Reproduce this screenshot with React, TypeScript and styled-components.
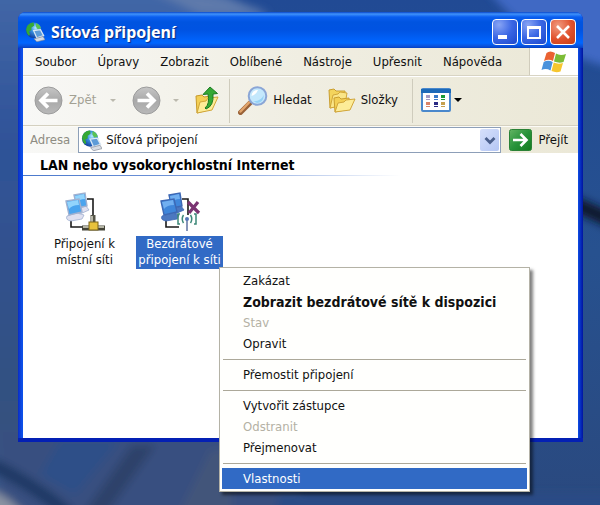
import React from "react";
import styled, { createGlobalStyle, css } from "styled-components";

const Global = createGlobalStyle`
  * { box-sizing: border-box; }
  body { margin: 0; }
  body, button, input {
    font: 13px/16px "DejaVu Sans Condensed", Tahoma, "Noto Sans", sans-serif;
    color: #111;
  }
  button { padding: 0; border: 0; background: none; white-space: nowrap; }
  ul { margin: 0; padding: 0; list-style: none; }
  svg { display: block; flex: none; }
`;

const Desktop = styled.main`
  position: relative;
  display: flex;
  min-height: 100vh;
  padding: 12px 17px 63px 18px;
  background: #284a86;
`;

const Wallpaper = styled.svg`
  position: absolute;
  inset: 0;
  width: 100%;
  height: 100%;
`;

const Window = styled.section`
  position: relative;
  flex: 1;
  min-width: 0;
  display: flex;
  flex-direction: column;
  padding: 0 5px 4px;
  border-radius: 8px 8px 0 0;
  background: linear-gradient(90deg, #0a2cc4, #0d50e8 4px, #0d50e8 calc(100% - 5px), #0a3fd4 calc(100% - 4px), #0014a0);
  box-shadow: inset 0 -4px 0 #0420b4;
`;

const TitleBar = styled.header`
  display: flex;
  align-items: center;
  height: 36px;
  margin: 0 -5px;
  padding: 4px 7px 0 7px;
  gap: 6px;
  border-radius: 8px 8px 0 0;
  background: linear-gradient(#0a46c8, #3f92fb 2px, #0a5ef0 5px, #0054e0 10px, #0053e2 18px, #0062fa 28px, #0066ff 31px, #0a52dc 34px, #0340c4);
`;

const Title = styled.h1`
  flex: 1;
  margin: 0;
  font: bold 16px/22px "Noto Sans", sans-serif;
  color: #fff;
  text-shadow: 1px 1px 1px #0a2a80;
`;

const WindowButtons = styled.div`
  display: flex;
  gap: 3px;
`;

const WindowButton = styled.button<{ $danger?: boolean }>`
  display: grid;
  place-items: center;
  width: 26px;
  height: 26px;
  border: 1px solid #fff;
  border-radius: 4px;
  background: ${(p) =>
    p.$danger
      ? "radial-gradient(circle at 30% 25%, #f09a80, #e0502c 55%, #c43c14)"
      : "radial-gradient(circle at 25% 20%, #88a4f4, #3a66e4 50%, #1c48cc)"};
`;

const Bar = styled.div`
  display: flex;
  align-items: center;
  background: linear-gradient(90deg, #f8f8f6, #f0eee2 50%, #ebe8d7);
`;

const MenuBar = styled(Bar)`
  align-items: stretch;
  height: 28px;
  padding-left: 1px;
  border-bottom: 1px solid #d8d4c4;
`;

const MenuBarItem = styled.button`
  padding: 0 10px 0 11px;
`;

const Brand = styled.div`
  display: grid;
  place-items: center;
  width: 49px;
  margin-left: auto;
  border-left: 1px solid #d0ccbc;
  background: #fff;
`;

const ToolBar = styled(Bar)`
  height: 50px;
  padding: 0 12px 2px 11px;
  border-top: 1px solid #fff;
  border-bottom: 1px solid #d4d0c0;
`;

const ToolButton = styled.button<{ $gap?: number }>`
  display: flex;
  align-items: center;
  gap: ${(p) => p.$gap ?? 6}px;
  &:disabled { color: #a3a194; }
`;

const Arrow = styled.span<{ $faint?: boolean }>`
  border: ${(p) => (p.$faint ? 3 : 4)}px solid transparent;
  border-top-color: ${(p) => (p.$faint ? "#bbb9ae" : "#000")};
  border-bottom: 0;
  margin-left: ${(p) => (p.$faint ? 8 : 0)}px;
`;

const Spacer = styled.span<{ $narrow?: boolean }>`
  width: ${(p) => (p.$narrow ? 4 : 16)}px;
`;

const Divider = styled.span`
  align-self: stretch;
  width: 1px;
  margin: 2px 8px 0 10px;
  background: #cfccbd;
`;

const AddressBar = styled(Bar)`
  height: 27px;
  padding: 0 10px 0 7px;
  border-top: 1px solid #fcfbf6;
`;

const AddressLabel = styled.label`
  margin-right: 8px;
  color: #8e8c82;
`;

const AddressField = styled.div`
  flex: 1;
  min-width: 0;
  display: flex;
  align-items: center;
  height: 26px;
  padding: 1px 1px 1px 2px;
  border: 1px solid #8d9fb8;
  background: #fff;
`;

const AddressInput = styled.input`
  flex: 1;
  min-width: 0;
  padding: 0 0 0 4px;
  border: 0;
  outline: 0;
  background: transparent;
`;

const DropButton = styled.button`
  display: grid;
  place-items: center;
  width: 19px;
  height: 22px;
  border-radius: 2px;
  background: linear-gradient(135deg, #d6e0fb, #b4c6f4);
`;

const GoButton = styled(ToolButton)`
  margin-left: 8px;
`;

const Content = styled.div`
  flex: 1;
  background: #fff;
`;

const GroupTitle = styled.h2`
  margin: 0;
  padding: 4px 17px 2px;
  font-size: 14px;
  line-height: 16px;
  border-bottom: 1px solid;
  border-image: linear-gradient(90deg, #4a78cc, #7b9cdb 35%, transparent 68%) 1;
  color: #000;
`;

const Items = styled.ul`
  display: flex;
  gap: 6px;
  padding: 16px 17px;
`;

const Item = styled.li`
  position: relative;
  width: 89px;
`;

const ItemButton = styled.button`
  display: flex;
  flex-direction: column;
  align-items: center;
  gap: 4px;
  width: 100%;
  line-height: 16px;
`;

const ItemLabel = styled.span<{ $selected?: boolean }>`
  padding: 0 2px 1px;
  ${(p) =>
    p.$selected &&
    css`
      color: #fff;
      background: #316ac5;
    `}
`;

const ContextMenu = styled.ul`
  position: absolute;
  top: 75px;
  left: 84px;
  z-index: 1;
  width: 311px;
  padding: 2px;
  border: 1px solid #b4b2a6;
  background: #fffffd;
  box-shadow: 3px 3px 3px rgba(0, 0, 0, 0.5);
`;

const MenuRow = styled.button<{ $active?: boolean; $strong?: boolean }>`
  display: block;
  width: 100%;
  height: 21px;
  padding: 0 21px;
  text-align: left;
  color: ${(p) => (p.$active ? "#fff" : "#111")};
  background: ${(p) => (p.$active ? "#316ac5" : "transparent")};
  ${(p) => p.$strong && "font-size: 14px; font-weight: bold;"}
  &:disabled { color: #b4b1a4; }
`;

const Separator = styled.li`
  height: 1px;
  margin: 5px 1px 4px;
  background: #aca899;
`;

function WallpaperArt() {
  return (
    <Wallpaper viewBox="0 0 600 505" preserveAspectRatio="none" aria-hidden="true">
      <defs>
        <linearGradient id="left" x1="0" y1="0" x2="0" y2="1">
          <stop offset="0" stopColor="#4469a8" />
          <stop offset=".3" stopColor="#2f5298" />
          <stop offset=".8" stopColor="#34517f" />
          <stop offset="1" stopColor="#3a5a90" />
        </linearGradient>
        <linearGradient id="right" x1="0" y1="0" x2="0" y2="1">
          <stop offset="0" stopColor="#214a94" />
          <stop offset=".5" stopColor="#27518f" />
          <stop offset="1" stopColor="#2a497f" />
        </linearGradient>
        <filter id="soft"><feGaussianBlur stdDeviation="4" /></filter>
      </defs>
      <rect width="600" height="505" fill="url(#right)" />
      <g filter="url(#soft)">
        <path d="M-20-20H200Q250 5 300 40V530H-20Z" fill="url(#left)" />
        <path d="M170-10Q230-4 270 14H200L150-10Z" fill="#5f7aab" />
        <path d="M480-20Q530 50 620 70V-20Z" fill="#4069c4" />
        <path d="M570 194L615 214V230L570 210Z" fill="#10182c" />
        <path d="M0 430H250L290 520H0Z" fill="#374f80" />
        <path d="M60 440H120L75 495L40 475Z" fill="#2e5088" />
        <path d="M132 445H156L106 515H82Z" fill="#2d426b" />
        <path d="M210 450L232 450V515H178Z" fill="#42547a" />
        <path d="M-10 464Q30 482 70 515" fill="none" stroke="#1f3763" strokeWidth="13" />
        <path d="M-20 488Q8 490 32 525H-20Z" fill="#8a93a2" />
        <path d="M280 494H620V530H270Z" fill="#2a4b86" />
      </g>
    </Wallpaper>
  );
}

function NetworkGlobe({ size }: { size: number }) {
  return (
    <svg width={size} height={size} viewBox="0 0 22 22" aria-hidden="true">
      <defs>
        <radialGradient id="globe" cx=".62" cy=".35" r=".7">
          <stop offset="0" stopColor="#b8ecff" />
          <stop offset=".4" stopColor="#3b94e4" />
          <stop offset="1" stopColor="#103a98" />
        </radialGradient>
      </defs>
      <circle cx="9.500" cy="9" r="8.500" fill="url(#globe)" />
      <path d="M3 3.500Q6 .2 9.500 .6L10 4 7 6 7 9 4.500 10 5.500 14 4 15Q-1 9 3 3.500Z" fill="#35a935" />
      <path d="M12 1Q17 3 17.500 7L14 8 12 5Z" fill="#59c353" />
      <path d="M9.500 9.500L17 8.500 20.500 15 13 17.500Z" fill="#5d9bd8" stroke="#dce8f4" strokeWidth="1.400" />
      <path d="M10 18.500L20 16 22 19.500 13 21.800Z" fill="#d8dce4" stroke="#7f8794" strokeWidth=".7" />
    </svg>
  );
}

function RoundArrow({ forward }: { forward?: boolean }) {
  return (
    <svg width="29" height="29" viewBox="0 0 29 29" aria-hidden="true">
      <defs>
        <linearGradient id="disc" x1="0" y1="0" x2="0" y2="1">
          <stop offset="0" stopColor="#c6c6c6" />
          <stop offset=".5" stopColor="#a9a9a9" />
          <stop offset="1" stopColor="#b9b9b9" />
        </linearGradient>
      </defs>
      <circle cx="14.500" cy="14.500" r="13.500" fill="url(#disc)" stroke="#9c9c9c" />
      <path
        d={forward ? "M5.500 14.500H22M15 7.500L22 14.500 15 21.500" : "M23.500 14.500H7M14 7.500L7 14.500 14 21.500"}
        fill="none"
        stroke="#fff"
        strokeWidth="3.600"
      />
    </svg>
  );
}

function FolderUp() {
  return (
    <svg width="24" height="28" viewBox="0 0 24 28" aria-hidden="true">
      <path d="M1 10L7 9 9 11 16 10 17 23 2 27Z" fill="#f3cf55" stroke="#c79a2a" />
      <path d="M2 27L5 16 11 15 13 12 23 11 17 24Z" fill="#fdec98" stroke="#d1a63a" />
      <path d="M10 22Q15 18 13 8L8 8.500 15 1 22.500 7.500 18 8Q19 20 11 23Z" fill="#35a935" stroke="#1b7a22" />
    </svg>
  );
}

function Magnifier() {
  return (
    <svg width="30" height="29" viewBox="0 0 30 29" aria-hidden="true">
      <path d="M2.500 26.500L12 17" stroke="#9a6238" strokeWidth="5" strokeLinecap="round" />
      <path d="M2.500 25.500L11 16.500" stroke="#e2a56c" strokeWidth="2.500" strokeLinecap="round" />
      <circle cx="19.500" cy="10" r="8.800" fill="#c4e8fc" stroke="#8ba6d6" strokeWidth="2" />
      <path d="M13.500 10A6 6 0 0 1 20 4Q18 9 13.500 10Z" fill="#fff" />
      <path d="M15 15Q22 16 26 9Q25 17 19 17Z" fill="#95d2f6" />
    </svg>
  );
}

function Folders() {
  return (
    <svg width="28" height="26" viewBox="0 0 28 26" aria-hidden="true">
      <path d="M1 3L6 2 8 4 17 4V17L2 21Z" fill="#f4d45c" stroke="#c99e30" />
      <path d="M2 21L5 8 10 7 12 5 19 6 17 18Z" fill="#fae588" stroke="#d1a63a" />
      <path d="M6 11L11 10 13 12 21 11 22 22 7 25Z" fill="#f3cf55" stroke="#c99e30" />
      <path d="M7 25L10 16 16 15 18 13 27 12 22 23Z" fill="#fdec98" stroke="#d1a63a" />
    </svg>
  );
}

const VIEW_CELLS = [
  ["#a59ac4", 5, 6], ["#3979c8", 13, 6], ["#199a35", 20, 6],
  ["#d98468", 5, 13], ["#2a2a84", 13, 13], ["#c6a04e", 20, 13],
] as const;

function Views() {
  return (
    <svg width="30" height="24" viewBox="0 0 30 24" aria-hidden="true">
      <rect x="1" y="1" width="28" height="22" rx="1" fill="#fff" stroke="#4a88cc" strokeWidth="2" />
      <path d="M0 1H30V5H0Z" fill="#1d6ab8" />
      {VIEW_CELLS.map(([fill, x, y]) => (
        <g key={fill} fill={fill}>
          <rect x={x} y={y + 1} width="4" height="3" />
          <rect x={x} y={y + 5} width="4" height="1" />
        </g>
      ))}
    </svg>
  );
}

function Flag() {
  return (
    <svg width="26" height="24" viewBox="0 0 26 24" aria-hidden="true">
      <path d="M5.500 3Q9 0 14 3L12 11Q8 8.500 3 11Z" fill="#ea6232" />
      <path d="M15 3.500Q19 6 25 4L22.500 12Q18 13.500 13 11.500Z" fill="#7cbc36" />
      <path d="M2.700 12Q7 9.500 11.700 12L9.500 20.500Q5 18 .5 20Z" fill="#4a92dc" />
      <path d="M12.700 12.500Q17 14.500 22 13L19.500 21.500Q15 23 10.500 21Z" fill="#f6c62e" />
    </svg>
  );
}

function Go() {
  return (
    <svg width="23" height="22" viewBox="0 0 23 22" aria-hidden="true">
      <defs>
        <linearGradient id="go" x1="0" y1="0" x2="1" y2="1">
          <stop offset="0" stopColor="#63b463" />
          <stop offset=".5" stopColor="#27933a" />
          <stop offset="1" stopColor="#137a1e" />
        </linearGradient>
      </defs>
      <rect x=".5" y=".5" width="22" height="21" rx="2" fill="url(#go)" stroke="#2a8236" />
      <path d="M4 11H17M11.500 5L17.500 11 11.500 17" fill="none" stroke="#fff" strokeWidth="2.600" />
    </svg>
  );
}

function Connection({ wireless }: { wireless?: boolean }) {
  const edge = wireless ? "#3d68b4" : "#9fb0d0";
  const screen = wireless ? "#3f86da" : "#4aa4ee";
  const light = wireless ? "#71aff0" : "#92d4fc";
  const base = wireless ? "#4c78c0" : "#dfe0f0";
  return (
    <svg width="42" height="40" viewBox="0 0 42 40" aria-hidden="true">
      <path d="M23 7H29V23M7 28V35H20" fill="none" stroke="#1a1a1a" strokeWidth="1.600" />
      <path d="M13 17L22 14 25 18 16 22Z" fill={base} stroke={edge} strokeWidth=".8" />
      <path d="M10 3L21 1 23 14 13 16Z" fill={screen} stroke={edge} strokeWidth="1.400" />
      <path d="M11 4L20 2 21 7Q15 7 12 11Z" fill={light} />
      <path d="M3 24L13 21 20 23 18 27 7 29Q1 28 3 24Z" fill={base} stroke={edge} strokeWidth=".8" />
      <path d="M2 9L15 7 18 20 5 23Z" fill={screen} stroke={edge} strokeWidth="1.400" />
      <path d="M3 10L14 8 15 13Q8 13 5 17Z" fill={light} />
      {wireless ? (
        <>
          <path d="M29 10L40 21M39 10L30 21" stroke="#7b3472" strokeWidth="3.200" />
          <path d="M28 39V28" stroke="#8795b8" strokeWidth="2" />
          <circle cx="28" cy="27" r="2" fill="#5576b8" />
          <path d="M24.500 23Q22 27 24.500 31M31.500 23Q34 27 31.500 31M21 22H19V32H21M35 22H37V32H35" fill="none" stroke="#3c8878" strokeWidth="1.500" />
        </>
      ) : (
        <>
          <path d="M18 36H41" stroke="#444438" strokeWidth="5" />
          <path d="M19 35H40" stroke="#b5b5a5" strokeWidth="2" />
          <path d="M29 23V31" stroke="#555548" strokeWidth="5" />
          <path d="M28 24V31" stroke="#b8b8aa" strokeWidth="2" />
          <rect x="25" y="30" width="9" height="8" fill="#e8c23c" stroke="#7b641a" />
        </>
      )}
    </svg>
  );
}

const MENUS = ["Soubor", "Úpravy", "Zobrazit", "Oblíbené", "Nástroje", "Upřesnit", "Nápověda"];

type Entry = { text: string; disabled?: boolean; strong?: boolean; active?: boolean } | null;

const ENTRIES: Entry[] = [
  { text: "Zakázat" },
  { text: "Zobrazit bezdrátové sítě k dispozici", strong: true },
  { text: "Stav", disabled: true },
  { text: "Opravit" },
  null,
  { text: "Přemostit připojení" },
  null,
  { text: "Vytvořit zástupce" },
  { text: "Odstranit", disabled: true },
  { text: "Přejmenovat" },
  null,
  { text: "Vlastnosti", active: true },
];

export default function App() {
  return (
    <>
      <Global />
      <Desktop>
        <WallpaperArt />
        <Window>
          <TitleBar>
            <NetworkGlobe size={20} />
            <Title>Síťová připojení</Title>
            <WindowButtons>
              <WindowButton aria-label="Minimalizovat">
                <svg width="18" height="18" viewBox="0 0 18 18"><path d="M2 12H11V16H2Z" fill="#fff" /></svg>
              </WindowButton>
              <WindowButton aria-label="Maximalizovat">
                <svg width="18" height="18" viewBox="0 0 18 18"><path d="M2 3H16V16H2ZM4 6V14H14V6Z" fill="#fff" fillRule="evenodd" /></svg>
              </WindowButton>
              <WindowButton $danger aria-label="Zavřít">
                <svg width="18" height="18" viewBox="0 0 18 18"><path d="M3 3L15 15M15 3L3 15" stroke="#fff" strokeWidth="2.600" /></svg>
              </WindowButton>
            </WindowButtons>
          </TitleBar>

          <MenuBar as="nav">
            {MENUS.map((name) => (
              <MenuBarItem key={name}>{name}</MenuBarItem>
            ))}
            <Brand><Flag /></Brand>
          </MenuBar>

          <ToolBar role="toolbar">
            <ToolButton disabled>
              <RoundArrow />
              Zpět
              <Arrow $faint />
            </ToolButton>
            <Spacer />
            <ToolButton disabled aria-label="Vpřed" $gap={4}>
              <RoundArrow forward />
              <Arrow $faint />
            </ToolButton>
            <Spacer />
            <ToolButton aria-label="Nahoru"><FolderUp /></ToolButton>
            <Divider />
            <ToolButton $gap={5}><Magnifier />Hledat</ToolButton>
            <Spacer />
            <ToolButton $gap={5}><Folders />Složky</ToolButton>
            <Spacer $narrow />
            <Divider />
            <ToolButton aria-label="Zobrazení" $gap={3}><Views /><Arrow /></ToolButton>
          </ToolBar>

          <AddressBar>
            <AddressLabel htmlFor="address">Adresa</AddressLabel>
            <AddressField>
              <NetworkGlobe size={21} />
              <AddressInput id="address" defaultValue="Síťová připojení" />
              <DropButton aria-label="Rozbalit">
                <svg width="12" height="9" viewBox="0 0 12 9"><path d="M1.500 2L6 6.500 10.500 2" fill="none" stroke="#4a5f8c" strokeWidth="2.800" /></svg>
              </DropButton>
            </AddressField>
            <GoButton><Go />Přejít</GoButton>
          </AddressBar>

          <Content>
            <GroupTitle>LAN nebo vysokorychlostní Internet</GroupTitle>
            <Items>
              <Item>
                <ItemButton>
                  <Connection />
                  <ItemLabel>Připojení k<br />místní síti</ItemLabel>
                </ItemButton>
              </Item>
              <Item>
                <ItemButton>
                  <Connection wireless />
                  <ItemLabel $selected>Bezdrátové<br />připojení k síti</ItemLabel>
                </ItemButton>
                <ContextMenu role="menu">
                  {ENTRIES.map((entry, i) =>
                    entry ? (
                      <li key={entry.text} role="none">
                        <MenuRow role="menuitem" disabled={entry.disabled} $strong={entry.strong} $active={entry.active}>
                          {entry.text}
                        </MenuRow>
                      </li>
                    ) : (
                      <Separator key={i} role="separator" />
                    )
                  )}
                </ContextMenu>
              </Item>
            </Items>
          </Content>
        </Window>
      </Desktop>
    </>
  );
}
